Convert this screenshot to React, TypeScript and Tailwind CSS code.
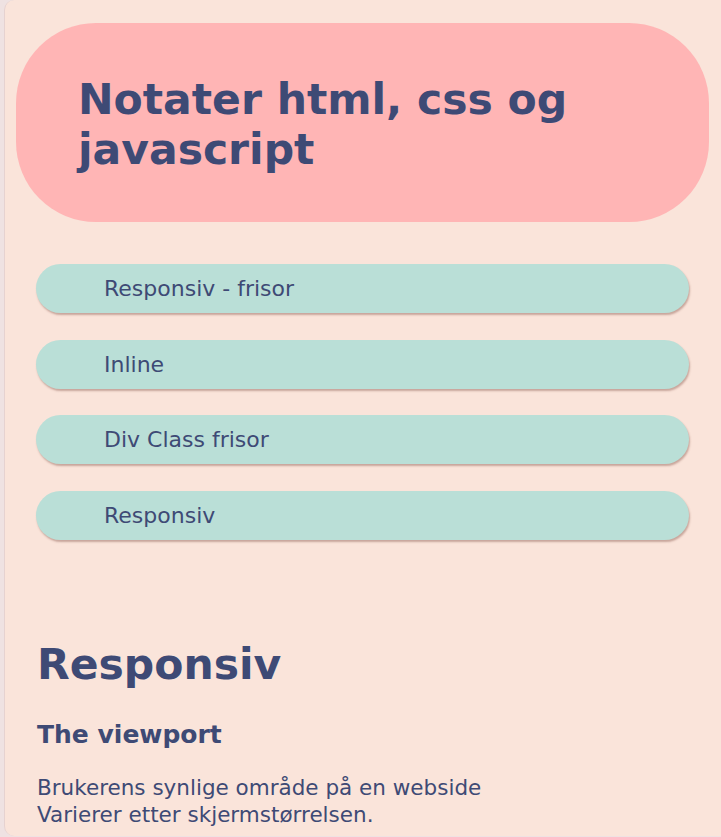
import React from 'react';

const links = ['Responsiv - frisor', 'Inline', 'Div Class frisor', 'Responsiv'];

export default function App() {
    return (
        <div className="min-h-[837px] bg-[#efe2e2] pl-[4px]" style={{ fontFamily: '"DejaVu Sans", Verdana, sans-serif' }}>
            <div className="h-[836px] overflow-hidden rounded-l-[10px] border-l border-[#e6d2d0] bg-[#fae4da] pt-[23px] pl-[11px] pr-[12px] text-[#3e4a75]">
                {/* Header */}
                <header className="flex h-[199px] flex-col justify-center rounded-[80px] bg-[#ffb5b5] pl-[62px] pt-[4px]">
                    <h1 className="text-[42.5px] font-bold leading-[50px]">
                        Notater html, css og
                        <br />
                        javascript
                    </h1>
                </header>

                {/* Navigation */}
                <nav className="mt-[42px] flex flex-col gap-[26.5px] px-[20px]">
                    {links.map((link) => (
                        <a
                            key={link}
                            href="#"
                            className="flex h-[49px] items-center rounded-full bg-[#badfd7] pl-[68px] text-[22px] shadow-[1px_2px_2px_rgba(140,90,80,0.45)]"
                        >
                            {link}
                        </a>
                    ))}
                </nav>

                {/* Content */}
                <section className="mt-[100px] pl-[21px]">
                    <h2 className="text-[42.5px] font-bold leading-[50px]">Responsiv</h2>
                    <h3 className="mt-[30px] text-[25px] font-bold leading-[30px]">The viewport</h3>
                    <p className="mt-[24px] text-[21.5px] leading-[27.5px]">
                        Brukerens synlige område på en webside
                        <br />
                        Varierer etter skjermstørrelsen.
                    </p>
                </section>
            </div>
        </div>
    );
}
